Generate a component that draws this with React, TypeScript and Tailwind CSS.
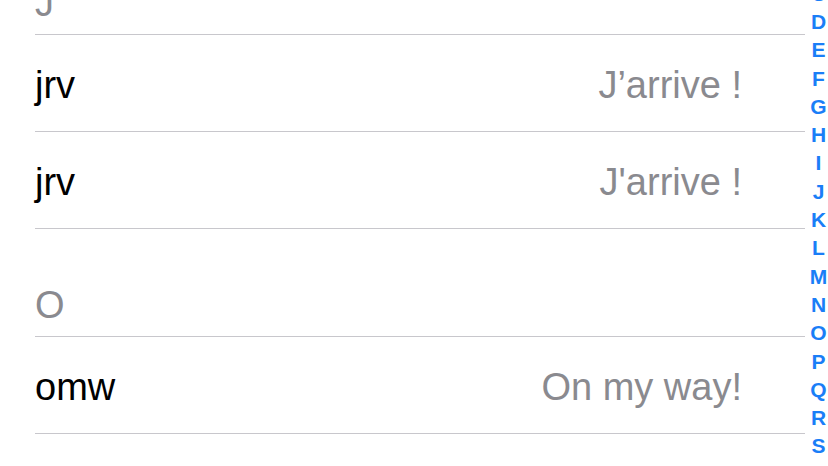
import React from 'react';

type Item =
  | { kind: 'header'; label: string }
  | { kind: 'row'; shortcut: string; phrase: string };

const items: Item[] = [
  { kind: 'header', label: 'J' },
  { kind: 'row', shortcut: 'jrv', phrase: 'J\u2019arrive !' },
  { kind: 'row', shortcut: 'jrv', phrase: "J'arrive !" },
  { kind: 'header', label: 'O' },
  { kind: 'row', shortcut: 'omw', phrase: 'On my way!' },
];

const letters = ['C', 'D', 'E', 'F', 'G', 'H', 'I', 'J', 'K', 'L', 'M', 'N', 'O', 'P', 'Q', 'R', 'S'];

const App = () => {
  return (
    <div
      className="w-[828px] h-[466px] overflow-hidden bg-white flex"
      style={{ fontFamily: '"Liberation Sans", Arial, sans-serif' }}
    >
      <div className="w-[805px] pl-[35px] -mt-[73px] flex flex-col">
        {items.map((item, i) =>
          item.kind === 'header' ? (
            <div
              key={i}
              className="h-[108px] flex items-end pb-[12px] border-b border-[#c8c7cc] shrink-0"
            >
              <span className="text-[38px] leading-none text-[#8a8a8f]">{item.label}</span>
            </div>
          ) : (
            <div
              key={i}
              className="h-[97px] flex items-center justify-between pt-[3px] pr-[63px] border-b border-[#c8c7cc] shrink-0"
            >
              <span className="text-[38px] leading-none text-black">{item.shortcut}</span>
              <span className="text-[38px] leading-none text-[#8a8a8f]">{item.phrase}</span>
            </div>
          )
        )}
      </div>
      <div className="flex-1 flex flex-col items-center pl-[4px] -mt-[21px]">
        {letters.map((l) => (
          <div
            key={l}
            className="h-[28.3px] shrink-0 flex items-center justify-center text-[21px] font-bold leading-none text-[#1a7ef7]"
          >
            {l}
          </div>
        ))}
      </div>
    </div>
  );
};

export default App;
